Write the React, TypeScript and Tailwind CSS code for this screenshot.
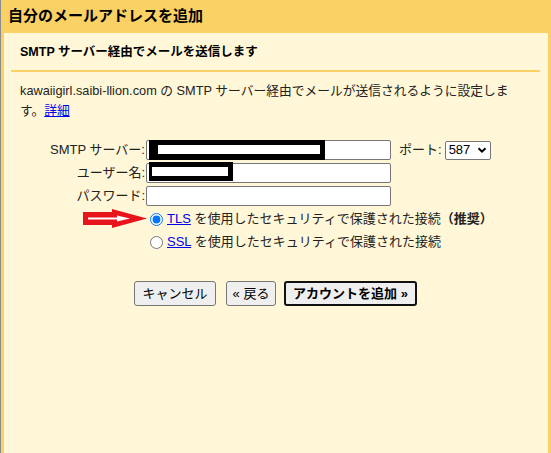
import React from "react";

const FONT = "font-['Liberation_Sans','Noto_Sans_CJK_JP',sans-serif]";

const Field = ({ label, children }: { label: string; children: React.ReactNode }) => (
  <div className="flex items-center h-[20px]">
    <div className="w-[126px] text-right pr-[1px] text-[13px] text-[#222]">{label}</div>
    {children}
  </div>
);

const TextBox = ({ redact }: { redact?: "server" | "user" }) => (
  <div className="relative w-[245px] h-[20px] bg-white border border-[#767676] rounded-[2px]">
    {/* redaction marks drawn over the input */}
    {redact === "server" && (
      <div className="absolute left-[2px] top-[-1px] w-[176px] h-[20px] bg-black">
        <div className="absolute left-[9px] top-[5px] w-[162px] h-[9px] bg-white" />
      </div>
    )}
    {redact === "user" && (
      <div className="absolute left-[2px] top-[-2px] w-[84px] h-[19px] bg-black">
        <div className="absolute left-[3px] top-[5px] w-[76px] h-[9px] bg-white" />
      </div>
    )}
  </div>
);

export default function App() {
  return (
    <div className={`w-[551px] h-[453px] bg-[#fad165] border-l border-[#8a8a8a] flex flex-col ${FONT}`}>
      {/* Header */}
      <div className="h-[33px] pl-[7px] flex items-center text-[15px] font-bold text-black">
        自分のメールアドレスを追加
      </div>

      {/* Panel */}
      <div className="relative flex-1 bg-[#fff7d7] ml-[3px] mr-[3px] text-[#222]">
        <div className="pl-[16px] pt-[11px] leading-[16px] text-[12.5px] font-bold text-black">
          SMTP サーバー経由でメールを送信します
        </div>
        <div className="ml-[7px] mr-[8px] mt-[10px] h-[2px] bg-[#fad165]" />

        <p className="pl-[16px] pr-[10px] mt-[9px] text-[12.75px] leading-[20px]">
          kawaiigirl.saibi-llion.com の SMTP サーバー経由でメールが送信されるように設定しま
          <br />
          す。
          <a className="text-[#0000ee] underline">詳細</a>
        </p>

        {/* Form */}
        <div className="mt-[19px] pl-[16px] flex flex-col gap-[3px]">
          <Field label="SMTP サーバー:">
            <TextBox redact="server" />
            <span className="ml-[8px] text-[13px]">ポート:</span>
            <div className="ml-[3px] w-[46px] h-[19px] bg-white border border-[#767676] rounded-[2px] flex items-center justify-between pl-[3px] pr-[3px] text-[13px] text-black">
              <span>587</span>
              <svg width="10" height="10" viewBox="0 0 10 10">
                <path d="M1.5 3.2 L5 6.7 L8.5 3.2" fill="none" stroke="#000" strokeWidth="2" />
              </svg>
            </div>
          </Field>
          <Field label="ユーザー名:">
            <TextBox redact="user" />
          </Field>
          <Field label="パスワード:">
            <TextBox />
          </Field>

          <div className="flex items-center h-[20px] pl-[126px] text-[13px]">
            <input type="radio" name="sec" defaultChecked className="ml-[4px] w-[13px] h-[13px] m-0" />
            <span className="ml-[4px]">
              <a className="text-[#0000ee] underline">TLS</a> を使用したセキュリティで保護された接続
              <span className="font-bold">（推奨）</span>
            </span>
          </div>
          <div className="flex items-center h-[20px] pl-[126px] text-[13px]">
            <input type="radio" name="sec" className="ml-[4px] w-[13px] h-[13px] m-0" />
            <span className="ml-[4px]">
              <a className="text-[#0000ee] underline">SSL</a> を使用したセキュリティで保護された接続
            </span>
          </div>
        </div>

        {/* Buttons */}
        <div className="mt-[29px] pl-[130px] flex items-center text-[13px] text-black">
          <button className="w-[82px] h-[25px] bg-[#efefef] border border-[#767676] rounded-[3px]">キャンセル</button>
          <button className="ml-[10px] w-[50px] h-[25px] bg-[#efefef] border border-[#767676] rounded-[3px]">« 戻る</button>
          <button className="ml-[8px] w-[133px] h-[25px] bg-[#efefef] border-2 border-[#111] rounded-[3px] font-bold">
            アカウントを追加 »
          </button>
        </div>

        {/* Red annotation arrow */}
        <svg className="absolute left-[79px] top-[176px]" width="66" height="20" viewBox="0 0 66 20">
          <polygon points="0,3 29,3 29,0 64,9.5 29,19 29,16 0,16" fill="#e8141c" />
          <polygon points="5,8.5 34,8.5 34,6.5 47,9.5 34,12.5 34,10.5 5,10.5" fill="#fff" />
        </svg>
      </div>
    </div>
  );
}
